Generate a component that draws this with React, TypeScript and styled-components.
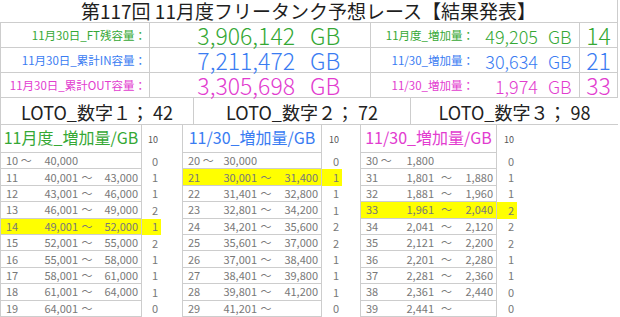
import React from "react";
import styled, { createGlobalStyle } from "styled-components";

const FONT = `"Noto Sans CJK JP", "Noto Sans", sans-serif`;
const GRID = "#cdcdcd";
const TONES = { green: "#35a835", blue: "#3a7cf2", pink: "#e23ccf" } as const;
type Tone = keyof typeof TONES;

const Global = createGlobalStyle`
  *, *::before, *::after { box-sizing: border-box; }
  html, body { margin: 0; padding: 0; background: #fff; }
  body { font-family: ${FONT}; }
`;

const Page = styled.div`
  width: 618px;
  height: 317px;
  overflow: hidden;
  background: #fff;
  font-family: ${FONT};
  line-height: 1;
`;

const Title = styled.div`
  height: 23px;
  border-bottom: 1px solid ${GRID};
  border-right: 1px solid ${GRID};
  display: flex;
  align-items: center;
  justify-content: center;
  padding-bottom: 1px;
  font-size: 19px;
  line-height: 21px;
  color: #1e1e1e;
  white-space: nowrap;
`;

const StatRow = styled.div<{ $tone: Tone }>`
  display: grid;
  grid-template-columns: 150px 221px 106px 103px 38px;
  height: 25px;
  border-bottom: 1px solid ${GRID};
  color: ${(p) => TONES[p.$tone]};
`;

const Cell = styled.div<{ $bl?: boolean; $br?: boolean }>`
  display: flex;
  align-items: center;
  padding-top: 1px;
  white-space: nowrap;
  min-width: 0;
  border-left: ${(p) => (p.$bl ? `1px solid ${GRID}` : "none")};
  border-right: ${(p) => (p.$br ? `1px solid ${GRID}` : "none")};
`;

const LabelCell = styled(Cell)`
  justify-content: flex-end;
  padding-top: 2px;
  padding-right: 3px;
  font-size: 11.5px;
`;

const ValueCell = styled(Cell)<{ $size: number }>`
  font-size: ${(p) => p.$size}px;
  font-weight: 300;
`;

const Num = styled.span<{ $w: number }>`
  display: inline-block;
  width: ${(p) => p.$w}px;
  text-align: right;
`;

const Unit = styled.span<{ $gap: number }>`
  margin-left: ${(p) => p.$gap}px;
`;

const CountCell = styled(Cell)`
  justify-content: center;
  font-size: 23px;
  font-weight: 300;
`;

const LotoRow = styled.div`
  display: grid;
  grid-template-columns: 194px 217px 207px;
  height: 27px;
  border-bottom: 1px solid ${GRID};
  color: #222;
`;

const LotoCell = styled(Cell)`
  justify-content: center;
  padding-top: 2px;
  font-size: 18px;
`;

const Tables = styled.div`
  display: flex;
  align-items: flex-start;
`;

const Group = styled.div<{ $tw: number; $cw: number; $mr: number }>`
  display: grid;
  grid-template-columns: ${(p) => p.$tw}px ${(p) => p.$cw}px;
  grid-template-rows: 28px repeat(10, 16.4px);
  margin-right: ${(p) => p.$mr}px;
`;

const HeaderBox = styled.div<{ $tone: Tone }>`
  display: flex;
  align-items: center;
  justify-content: center;
  padding-bottom: 3px;
  border-left: 1px solid ${GRID};
  border-right: 1px solid ${GRID};
  border-bottom: 1px solid ${GRID};
  color: ${(p) => TONES[p.$tone]};
  font-size: 16px;
  white-space: nowrap;
`;

const HeaderCount = styled.div`
  display: flex;
  align-items: center;
  justify-content: flex-end;
  padding-right: 3px;
  font-size: 9px;
  color: #555;
`;

const DataCell = styled.div<{ $cols: string; $hl: boolean }>`
  display: grid;
  grid-template-columns: ${(p) => p.$cols};
  align-items: center;
  border-left: 1px solid ${GRID};
  border-right: 1px solid ${GRID};
  border-bottom: 1px solid ${GRID};
  background: ${(p) => (p.$hl ? "#ffff00" : "transparent")};
  font-size: 11px;
  color: #787878;
  white-space: nowrap;
`;

const NumPart = styled.span`
  padding-left: 5px;
`;
const LowPart = styled.span`
  text-align: right;
`;
const TildePart = styled.span`
  text-align: center;
`;
const HighPart = styled.span`
  text-align: right;
  padding-right: 3px;
`;

const DataCount = styled.div<{ $hl: boolean }>`
  display: flex;
  align-items: center;
  justify-content: flex-end;
  padding-right: 3px;
  background: ${(p) => (p.$hl ? "#ffff00" : "transparent")};
  font-size: 11px;
  color: #787878;
`;

type Row = [string, string, string, string, string, boolean?];

interface TableDef {
  title: string;
  tone: Tone;
  tw: number;
  cw: number;
  mr: number;
  cols: string;
  rows: Row[];
}

const T = "～";

const TABLES: TableDef[] = [
  {
    title: "11月度_増加量/GB",
    tone: "green",
    tw: 142,
    cw: 19,
    mr: 21,
    cols: "40px 37px 18px 1fr",
    rows: [
      [`10 ${T}`, "40,000", "", "", "0"],
      ["11", "40,001", T, "43,000", "1"],
      ["12", "43,001", T, "46,000", "1"],
      ["13", "46,001", T, "49,000", "2"],
      ["14", "49,001", T, "52,000", "1", true],
      ["15", "52,001", T, "55,000", "2"],
      ["16", "55,001", T, "58,000", "1"],
      ["17", "58,001", T, "61,000", "1"],
      ["18", "61,001", T, "64,000", "1"],
      ["19", "64,001", T, "", "0"],
    ],
  },
  {
    title: "11/30_増加量/GB",
    tone: "blue",
    tw: 140,
    cw: 20,
    mr: 18,
    cols: "40px 34px 18px 1fr",
    rows: [
      [`20 ${T}`, "30,000", "", "", "0"],
      ["21", "30,001", T, "31,400", "1", true],
      ["22", "31,401", T, "32,800", "1"],
      ["23", "32,801", T, "34,200", "1"],
      ["24", "34,201", T, "35,600", "2"],
      ["25", "35,601", T, "37,000", "2"],
      ["26", "37,001", T, "38,400", "1"],
      ["27", "38,401", T, "39,800", "1"],
      ["28", "39,801", T, "41,200", "1"],
      ["29", "41,201", T, "", "0"],
    ],
  },
  {
    title: "11/30_増加量/GB",
    tone: "pink",
    tw: 137,
    cw: 20,
    mr: 0,
    cols: "40px 33px 25px 1fr",
    rows: [
      [`30 ${T}`, "1,800", "", "", "0"],
      ["31", "1,801", T, "1,880", "1"],
      ["32", "1,881", T, "1,960", "1"],
      ["33", "1,961", T, "2,040", "2", true],
      ["34", "2,041", T, "2,120", "2"],
      ["35", "2,121", T, "2,200", "2"],
      ["36", "2,201", T, "2,280", "1"],
      ["37", "2,281", T, "2,360", "1"],
      ["38", "2,361", T, "2,440", "0"],
      ["39", "2,441", T, "", "0"],
    ],
  },
];

const STATS: { tone: Tone; label: string; big: string; label2: string; val: string; count: string }[] = [
  { tone: "green", label: "11月30日_FT残容量：", big: "3,906,142", label2: "11月度_増加量：", val: "49,205", count: "14" },
  { tone: "blue", label: "11月30日_累計IN容量：", big: "7,211,472", label2: "11/30_増加量：", val: "30,634", count: "21" },
  { tone: "pink", label: "11月30日_累計OUT容量：", big: "3,305,698", label2: "11/30_増加量：", val: "1,974", count: "33" },
];

export default function App() {
  return (
    <Page>
      <Global />
      <Title>第117回 11月度フリータンク予想レース【結果発表】</Title>
      {STATS.map((s) => (
        <StatRow key={s.label} $tone={s.tone}>
          <LabelCell $bl $br>{s.label}</LabelCell>
          <ValueCell $size={23} $br>
            <Num $w={145}>{s.big}</Num>
            <Unit $gap={15}>GB</Unit>
          </ValueCell>
          <LabelCell>{s.label2}</LabelCell>
          <ValueCell $size={18} $br>
            <Num $w={61}>{s.val}</Num>
            <Unit $gap={10}>GB</Unit>
          </ValueCell>
          <CountCell $br>{s.count}</CountCell>
        </StatRow>
      ))}
      <LotoRow>
        <LotoCell $bl $br>LOTO_数字１； 42</LotoCell>
        <LotoCell $br>LOTO_数字２； 72</LotoCell>
        <LotoCell>LOTO_数字３； 98</LotoCell>
      </LotoRow>
      <Tables>
        {TABLES.map((t) => (
          <Group key={t.tone} $tw={t.tw} $cw={t.cw} $mr={t.mr}>
            <HeaderBox $tone={t.tone}>{t.title}</HeaderBox>
            <HeaderCount>10</HeaderCount>
            {t.rows.map((r) => (
              <React.Fragment key={r[0]}>
                <DataCell $cols={t.cols} $hl={!!r[5]}>
                  <NumPart>{r[0]}</NumPart>
                  <LowPart>{r[1]}</LowPart>
                  <TildePart>{r[2]}</TildePart>
                  <HighPart>{r[3]}</HighPart>
                </DataCell>
                <DataCount $hl={!!r[5]}>{r[4]}</DataCount>
              </React.Fragment>
            ))}
          </Group>
        ))}
      </Tables>
    </Page>
  );
}
